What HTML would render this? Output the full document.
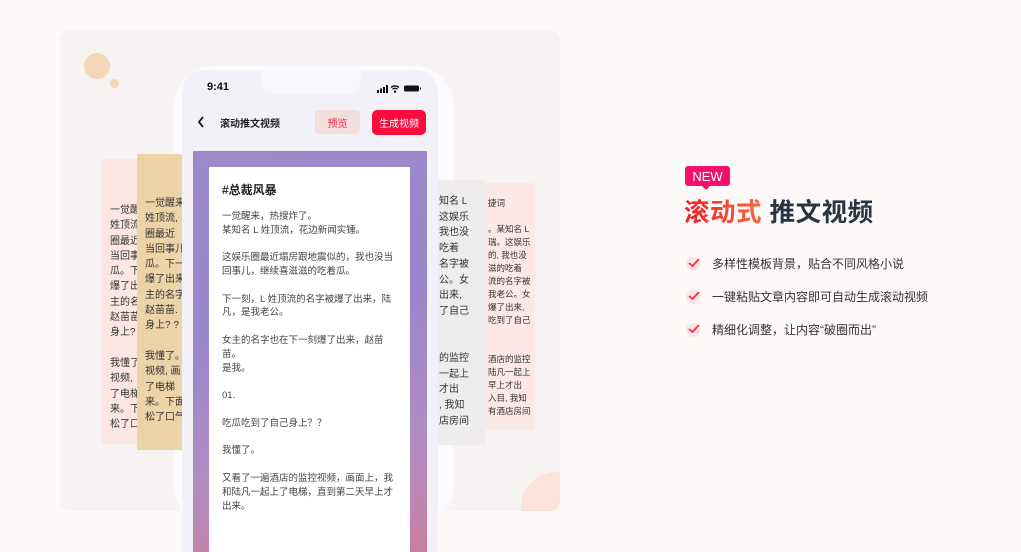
<!DOCTYPE html>
<html><head><meta charset="utf-8"><style>
*{margin:0;padding:0;box-sizing:border-box}
body{width:1021px;height:552px;overflow:hidden;background:#fdf9f9;font-family:"Liberation Sans","Noto Sans CJK SC",sans-serif;position:relative}
.abs{position:absolute}
.card{left:60px;top:30px;width:500px;height:481px;background:#f8f3f3;border-radius:10px;overflow:hidden}
.strip{font-size:10px;line-height:15.3px;color:#333;padding:44px 0 0 8px;overflow:hidden;white-space:nowrap}
.paper p{margin-bottom:13.8px}
.feat{font-size:12px;color:#333;left:686px;display:flex;align-items:center}
.chk{width:14px;height:14px;border-radius:50%;background:#fde3e6;margin-right:12px;position:relative}
.btn{display:flex;align-items:center;justify-content:center}
</style></head><body>
<div class="abs card">
  <div class="abs" style="left:24px;top:23px;width:26px;height:26px;border-radius:50%;background:#f5d7b8"></div>
  <div class="abs" style="left:50px;top:49px;width:9px;height:9px;border-radius:50%;background:#f5d7b8"></div>
  <div class="abs" style="left:461px;top:442px;width:70px;height:70px;border-radius:50%;background:#fbe3da"></div>
  <div class="abs" style="left:114px;top:36px;width:280px;height:460px;border-radius:40px;background:#fbfafc"></div>
</div>
<!-- left strips -->
<div class="abs strip" style="left:102px;top:159px;width:40px;height:285px;background:#fbe6e4">一觉醒<br>姓顶流<br>圈最近<br>当回事<br>瓜。下<br>爆了出<br>主的名<br>赵苗苗<br>身上?<br><br>我懂了<br>视频,<br>了电梯<br>来。下<br>松了口</div>
<div class="abs strip" style="left:137px;top:154px;width:45px;height:296px;background:#ecd3a8;padding-top:42px">一觉醒来<br>姓顶流,<br>圈最近<br>当回事儿<br>瓜。下一<br>爆了出来<br>主的名字<br>赵苗苗.<br>身上? ?<br><br>我懂了。<br>视频, 画<br>了电梯<br>来。下面<br>松了口气</div>
<!-- right strips -->
<div class="abs strip" style="left:485px;top:183px;width:50px;height:247px;background:#fbe8e7;font-size:8.5px;line-height:13px;padding:14px 0 0 3px">捷词<br><br>。某知名 L<br>瑞。这娱乐<br>的, 我也没<br>滋的吃着<br>流的名字被<br>我老公。女<br>爆了出来,<br>吃到了自己<br><br><br>酒店的监控<br>陆凡一起上<br>早上才出<br>入目, 我知<br>有酒店房间</div>
<div class="abs strip" style="left:437px;top:180px;width:48px;height:265px;background:#eeeced;padding:14px 0 0 2px;line-height:15.7px">知名 L<br>这娱乐<br>我也没<br>吃着<br>名字被<br>公。女<br>出来,<br>了自己<br><br><br>的监控<br>一起上<br>才出<br>, 我知<br>店房间</div>
<!-- phone -->
<div class="abs" style="left:182px;top:70px;width:256px;height:482px;background:#f2f1f7;border-radius:22px 22px 0 0"></div>
<div class="abs" style="left:261px;top:70px;width:100px;height:24px;background:#f7f6fa;border-radius:0 0 12px 12px"></div>
<div class="abs" style="left:207px;top:81px;font-size:11px;font-weight:bold;color:#111">9:41</div>
<svg class="abs" style="left:377px;top:84px" width="48" height="9" viewBox="0 0 48 9"><rect x="0" y="6" width="2" height="3" fill="#111"/><rect x="3" y="4.5" width="2" height="4.5" fill="#111"/><rect x="6" y="3" width="2" height="6" fill="#111"/><rect x="9" y="1" width="2" height="8" fill="#111"/><path d="M14 3.5a6 6 0 0 1 8 0M15.5 5.2a4 4 0 0 1 5 0" stroke="#111" stroke-width="1.4" fill="none"/><circle cx="18" cy="7.6" r="1.2" fill="#111"/><rect x="27" y="1.5" width="15" height="6" rx="1.5" fill="#111"/><rect x="43" y="3.5" width="1" height="2" fill="#111"/></svg>
<svg class="abs" style="left:197px;top:116px" width="8" height="12"><path d="M6 1L2 6l4 5" stroke="#111" stroke-width="1.8" fill="none"/></svg>
<div class="abs" style="left:220px;top:115px;font-size:10px;font-weight:bold;color:#222">滚动推文视频</div>
<div class="abs btn" style="left:315px;top:110px;width:45px;height:24px;background:#f3dede;border-radius:4px;color:#f2213f;font-size:10px">预览</div>
<div class="abs btn" style="left:372px;top:110px;width:54px;height:25px;background:#fb0a3c;border-radius:5px;color:#fff;font-size:10px">生成视频</div>
<div class="abs" style="left:193px;top:151px;width:234px;height:401px;background:linear-gradient(170deg,#9c8ac9 0%,#9a86cc 40%,#b08cc2 75%,#c8809f 100%)"></div>
<div class="abs paper" style="left:209px;top:167px;width:201px;height:385px;background:#fff;padding:17px 13px 0 13px;font-size:9.5px;line-height:13.8px;color:#444">
  <div style="font-size:12px;font-weight:bold;color:#222;margin-bottom:12px">#总裁风暴</div>
  <p>一觉醒来，热搜炸了。<br>某知名 L 姓顶流，花边新闻实锤。</p>
  <p>这娱乐圈最近塌房跟地震似的，我也没当回事儿，继续喜滋滋的吃着瓜。</p>
  <p>下一刻，L 姓顶流的名字被爆了出来，陆凡，是我老公。</p>
  <p>女主的名字也在下一刻爆了出来，赵苗苗。<br>是我。</p>
  <p>01.</p>
  <p>吃瓜吃到了自己身上？？</p>
  <p>我懂了。</p>
  <p>又看了一遍酒店的监控视频，画面上，我和陆凡一起上了电梯，直到第二天早上才出来。</p>
</div>
<!-- right text -->
<div class="abs btn" style="left:685px;top:166px;width:45px;height:20px;background:#f5116b;border-radius:3px;color:#fff;font-size:13px">NEW</div>
<div class="abs" style="left:701px;top:185px;width:0;height:0;border-left:5px solid transparent;border-right:5px solid transparent;border-top:5px solid #f5116b"></div>
<div class="abs" style="left:684px;top:192px;font-size:25.5px;font-weight:bold;letter-spacing:0.5px;white-space:nowrap"><span style="background:linear-gradient(90deg,#f41e2e,#f56a3a);-webkit-background-clip:text;background-clip:text;color:transparent">滚动式</span> <span style="color:#283544">推文视频</span></div>
<div class="abs feat" style="top:255px"><span class="chk"><svg class="abs" style="left:1px;top:0" width="14" height="12"><path d="M2 6l3.5 3L12 2" stroke="#f0304a" stroke-width="1.8" fill="none"/></svg></span>多样性模板背景，贴合不同风格小说</div>
<div class="abs feat" style="top:288px"><span class="chk"><svg class="abs" style="left:1px;top:0" width="14" height="12"><path d="M2 6l3.5 3L12 2" stroke="#f0304a" stroke-width="1.8" fill="none"/></svg></span>一键粘贴文章内容即可自动生成滚动视频</div>
<div class="abs feat" style="top:321px"><span class="chk"><svg class="abs" style="left:1px;top:0" width="14" height="12"><path d="M2 6l3.5 3L12 2" stroke="#f0304a" stroke-width="1.8" fill="none"/></svg></span>精细化调整，让内容“破圈而出”</div>
</body></html>
